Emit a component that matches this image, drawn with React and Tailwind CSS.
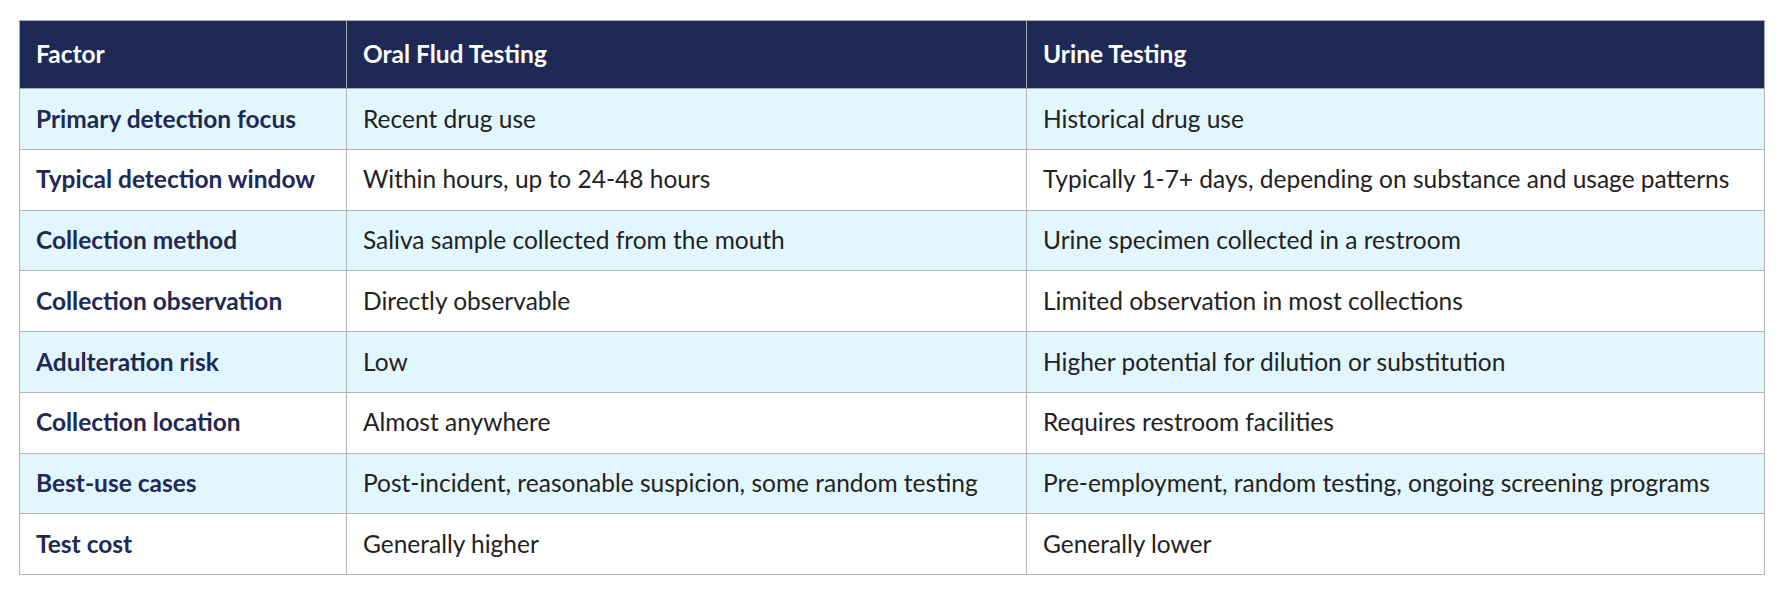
const rows = [
  ['Primary detection focus', 'Recent drug use', 'Historical drug use'],
  ['Typical detection window', 'Within hours, up to 24-48 hours', 'Typically 1-7+ days, depending on substance and usage patterns'],
  ['Collection method', 'Saliva sample collected from the mouth', 'Urine specimen collected in a restroom'],
  ['Collection observation', 'Directly observable', 'Limited observation in most collections'],
  ['Adulteration risk', 'Low', 'Higher potential for dilution or substitution'],
  ['Collection location', 'Almost anywhere', 'Requires restroom facilities'],
  ['Best-use cases', 'Post-incident, reasonable suspicion, some random testing', 'Pre-employment, random testing, ongoing screening programs'],
  ['Test cost', 'Generally higher', 'Generally lower'],
]

export default function App() {
  return (
    <div className="w-[1782px] h-[596px] bg-white pt-5 pl-[19px] font-['Lato',sans-serif]">
      <table className="w-[1745px] table-fixed border-collapse border border-[#9a9ca3] text-[24.5px] leading-none">
        <colgroup>
          <col className="w-[327px]" />
          <col className="w-[680px]" />
          <col className="w-[738px]" />
        </colgroup>
        <thead>
          <tr className="h-[68px] bg-[#1e2956] text-white">
            <th className="border border-[#a9abb2] px-4 text-left font-bold">Factor</th>
            <th className="border border-[#a9abb2] px-4 text-left font-bold">Oral Flud Testing</th>
            <th className="border border-[#a9abb2] px-4 text-left font-bold">Urine Testing</th>
          </tr>
        </thead>
        <tbody>
          {rows.map((r, i) => (
            <tr key={i} className={`h-[60.75px] ${i % 2 === 0 ? 'bg-[#e2f6fd]' : 'bg-white'}`}>
              <td className="border border-[#b4b4b4] px-4 font-bold text-[#1e2956] whitespace-nowrap">{r[0]}</td>
              <td className="border border-[#b4b4b4] px-4 text-[#222222] whitespace-nowrap">{r[1]}</td>
              <td className="border border-[#b4b4b4] px-4 text-[#222222] whitespace-nowrap">{r[2]}</td>
            </tr>
          ))}
        </tbody>
      </table>
    </div>
  )
}
